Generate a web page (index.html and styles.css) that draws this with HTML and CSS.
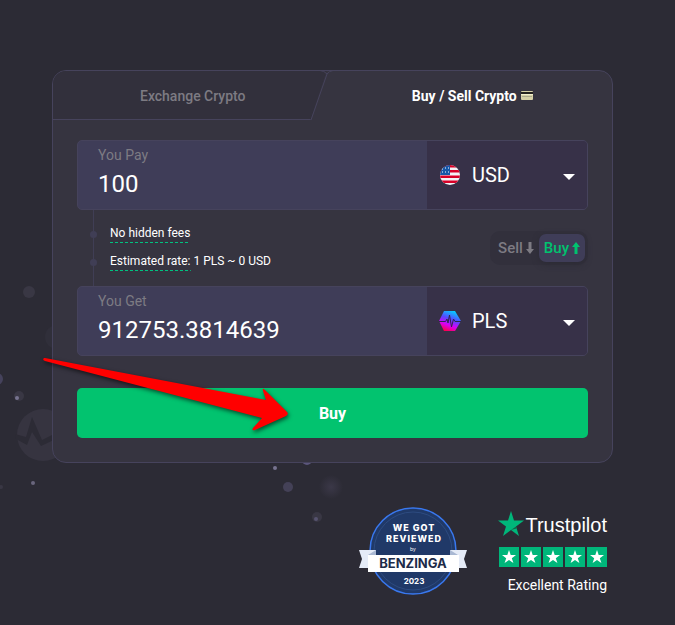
FILE: index.html
```html
<!DOCTYPE html>
<html lang="en">
<head>
<meta charset="utf-8">
<meta name="viewport" content="width=device-width, initial-scale=1">
<title>Buy Crypto</title>
<link rel="stylesheet" href="styles.css">
</head>
<body>
<svg class="backdrop" width="400" height="625" viewBox="0 0 400 625" aria-hidden="true">
  <defs>
    <radialGradient id="haze"><stop offset="0" stop-color="#3b3848"/><stop offset="1" stop-color="#2c2b35"/></radialGradient>
  </defs>
  <circle cx="29" cy="292" r="6" fill="#393744"/>
  <circle cx="57" cy="337" r="12" fill="#302f3a"/>
  <circle cx="-3" cy="379" r="6" fill="#45425c"/>
  <circle cx="19" cy="396" r="5" fill="#393744"/>
  <circle cx="17" cy="398" r="2" fill="#77738f"/>
  <circle cx="43" cy="435" r="26" fill="#363440"/>
  <path d="M15 434l11 3 6-20 10 23 16-8v6l-17 8-9-14-5 13-11-6z" fill="#2c2b35"/>
  <circle cx="33" cy="483" r="2" fill="#69667d"/>
  <circle cx="1" cy="487" r="2" fill="#393744"/>
  <circle cx="275" cy="468" r="2" fill="#77738f"/>
  <circle cx="307" cy="460" r="5" fill="#5b567c"/>
  <circle cx="288" cy="487" r="5" fill="#444157"/>
  <circle cx="331" cy="487" r="12" fill="url(#haze)"/>
  <circle cx="317" cy="517" r="5" fill="#393744"/>
  <circle cx="316" cy="519" r="2" fill="#57536f"/>
</svg>

<main class="page">
  <form class="card">
    <nav class="tabs">
      <button class="tab tab-muted" type="button"><span>Exchange Crypto</span>
        <svg class="slant" width="24" height="50" viewBox="0 0 24 50" aria-hidden="true"><path d="M2 49L18 3Q20 0 24 -0.500M11 -0.500Q15 -0.500 18 3" fill="none" stroke="#46435c"/></svg>
      </button>
      <button class="tab tab-active" type="button"><span>Buy / Sell Crypto</span>
        <svg width="12" height="9" viewBox="0 0 12 9" aria-hidden="true"><rect width="12" height="9" rx="1" fill="#d5d0a6"/><path d="M0 1h12v2H0z" fill="#24231f"/><path d="M1 5h10v1H1z" fill="#aaa98c"/><path d="M0 3h12v1H0z" fill="#f1efcf"/></svg>
      </button>
    </nav>

    <div class="content">
      <div class="field">
        <div class="amount">
          <label for="pay">You Pay</label>
          <input id="pay" type="text" value="100">
        </div>
        <div class="currency">
          <svg class="coin" width="22" height="22" viewBox="0 0 22 22" aria-hidden="true">
            <defs><clipPath id="disc"><circle cx="11" cy="11" r="10"/></clipPath></defs>
            <g clip-path="url(#disc)">
              <path d="M0 0h22v22H0z" fill="#f3f1f5"/>
              <path d="M0 1h22v2.500H0zM0 6h22v2.500H0zM0 11.500h22V14H0zM0 16.500h22V19H0z" fill="#d80027"/>
              <path d="M0 0h11v11H0z" fill="#1658a8"/>
              <path d="M3 5h1M6 4h1M9 4h1M3 8h1M6 8h1M9 8h1" stroke="#fff" stroke-width="1.200"/>
            </g>
          </svg>
          <select aria-label="Currency to pay"><option>USD</option></select>
          <svg class="caret" width="12" height="6" viewBox="0 0 12 6" aria-hidden="true"><path d="M0 0h12L6 6z" fill="#fff"/></svg>
        </div>
      </div>

      <div class="middle">
        <ul class="notes">
          <li><span class="hint">No hidden fees</span></li>
          <li><span class="hint">Estimated rate:</span> 1 PLS ~ 0 USD</li>
        </ul>
        <div class="toggle">
          <button type="button">Sell
            <svg width="8" height="12" viewBox="0 0 8 12" aria-hidden="true"><path d="M2.500 0h3v7H8l-4 5-4-5h2.500z" fill="currentColor"/></svg>
          </button>
          <button class="on" type="button">Buy
            <svg width="8" height="12" viewBox="0 0 8 12" aria-hidden="true"><path d="M2.500 12h3V5H8L4 0 0 5h2.500z" fill="currentColor"/></svg>
          </button>
        </div>
      </div>

      <div class="field">
        <div class="amount">
          <label for="get">You Get</label>
          <input id="get" type="text" value="912753.3814639">
        </div>
        <div class="currency">
          <svg class="coin" width="22" height="22" viewBox="0 0 22 22" aria-hidden="true">
            <defs><linearGradient id="pulse" x1=".7" y1="0" x2=".3" y2="1"><stop offset="0" stop-color="#00d5ff"/><stop offset=".4" stop-color="#5548ff"/><stop offset=".7" stop-color="#d800f5"/><stop offset="1" stop-color="#ff0048"/></linearGradient></defs>
            <path d="M5 1h11l6 10-6 10H5L0 11z" fill="url(#pulse)"/>
            <path d="M0 11.500h6.500L8 9l1 4 1.500-8 2 12L14.500 9l1.500 2.500h6" fill="none" stroke="#30264c"/>
          </svg>
          <select aria-label="Currency to get"><option>PLS</option></select>
          <svg class="caret" width="12" height="6" viewBox="0 0 12 6" aria-hidden="true"><path d="M0 0h12L6 6z" fill="#fff"/></svg>
        </div>
      </div>

      <button class="submit" type="button">Buy</button>
    </div>

    <svg class="pointer" width="256" height="84" viewBox="0 0 256 84" aria-hidden="true"><path d="M3 4Q1 6 4 7L221 64 212 74Q210 77 214 76L245 62Q248 60 246 58L224 36Q221 33 222 37L225 46 4 4z" fill="#f00"/></svg>
  </form>

  <footer class="awards">
    <svg width="110" height="90" viewBox="0 0 110 90" role="img" aria-label="We got reviewed by Benzinga 2023">
      <circle cx="55" cy="45" r="43" fill="#203968" stroke="#3978ef" stroke-width="1.500"/>
      <circle cx="55" cy="45" r="39" fill="none" stroke="#2d4b80"/>
      <path d="M1 44h17v18H1l3-9zM109 44H92v18h17l-3-9z" fill="#e5ebf7"/>
      <path d="M10 49l8-5v5zM100 49l-8-5v5z" fill="#a9b8d3"/>
      <path d="M10 49h91v17H10z" fill="#fff"/>
      <g class="badge-text" text-anchor="middle">
        <text class="badge-line" x="56" y="25">WE GOT</text>
        <text class="badge-line" x="56" y="36">REVIEWED</text>
        <text class="badge-by" x="55" y="45">by</text>
        <text class="badge-name" x="55" y="62">BENZINGA</text>
        <text class="badge-year" x="56" y="78">2023</text>
      </g>
    </svg>
    <div class="trust">
      <div class="trust-name">
        <svg width="26" height="25" viewBox="0 0 26 25" aria-hidden="true"><path d="M13 0l3 9.500h10l-8 6L21 25l-8-6-8 6 3-9.500-8-6h10z" fill="#00b67a"/><path d="M18.500 17.500L13 19l5-3.500z" fill="#126149"/></svg>
        <span>Trustpilot</span>
      </div>
      <svg width="108" height="20" viewBox="0 0 108 20" role="img" aria-label="5 of 5 stars">
        <defs><g id="star"><path d="M0 0h20v20H0z" fill="#00b67a"/><path d="M10 3l1.700 5H17l-4.200 3.200L14.400 16 10 13l-4.400 3 1.600-4.800L3 8h5.300z" fill="#fff"/></g></defs>
        <use href="#star"/><use href="#star" x="22"/><use href="#star" x="44"/><use href="#star" x="66"/><use href="#star" x="88"/>
      </svg>
      <span class="trust-note">Excellent Rating</span>
    </div>
  </footer>
</main>
</body>
</html>
```
FILE: styles.css
```css
* { box-sizing: border-box; }
body {
  margin: 0;
  background: #2c2b35;
  color: #fff;
  font-family: Roboto, "Liberation Sans", sans-serif;
}
button, input, select {
  font: inherit;
  color: inherit;
  border: 0;
  padding: 0;
  margin: 0;
  background: none;
}
svg { display: block; flex: none; }
.backdrop { position: absolute; left: 0; top: 0; z-index: -1; }
.page { padding: 70px 62px 24px 52px; }

.card {
  position: relative;
  background: #363440;
  border: 1px solid #46435c;
  border-radius: 14px;
}
.tabs { display: grid; grid-template-columns: 1fr 1fr; height: 49px; }
.tab {
  position: relative;
  display: flex;
  align-items: center;
  justify-content: center;
  gap: 4px;
  font-size: 14px;
  font-weight: 500;
}
.tab-active { font-weight: 700; }
.tab-muted { color: #7d7b83; }
.tab-muted span { position: relative; }
.tab-muted::before {
  content: "";
  position: absolute;
  inset: 0;
  background: #32303c;
  border-bottom: 1px solid #46435c;
  border-top-left-radius: 13px;
  clip-path: polygon(0 0, calc(100% - 6px) 0, calc(100% - 22px) 100%, 0 100%);
}
.slant { position: absolute; right: 0; top: 0; overflow: visible; }

.content { padding: 20px 24px 24px; }
.field {
  display: grid;
  grid-template-columns: 1fr 160px;
  height: 70px;
  border: 1px solid #46435c;
  border-radius: 5px;
  background: #3f3d58;
  overflow: hidden;
}
.amount { display: flex; flex-direction: column; padding: 5px 20px; }
.amount label { font-size: 14px; line-height: 18px; color: #7d7b83; }
.amount input { width: 100%; height: 40px; font-size: 24px; outline: 0; }
.currency {
  display: flex;
  align-items: center;
  padding: 0 12px;
  background: #373148;
}
.currency select {
  flex: 1;
  min-width: 0;
  padding-left: 11px;
  font-size: 20px;
  appearance: none;
  outline: 0;
}
.caret { margin-top: 4px; }

.middle {
  display: flex;
  justify-content: space-between;
  align-items: center;
  height: 76px;
  padding-left: 16px;
}
.notes {
  list-style: none;
  margin: 0;
  padding: 13px 0 11px 16px;
  border-left: 1px solid #403e55;
  font-size: 12px;
  line-height: 20px;
}
.notes li { position: relative; height: 28px; }
.notes li:last-child { height: 24px; }
.notes li::before {
  content: "";
  position: absolute;
  left: -20px;
  top: 8px;
  width: 7px;
  height: 7px;
  border-radius: 50%;
  background: #403e55;
}
.hint {
  display: inline-block;
  background: repeating-linear-gradient(90deg, #00c280 0 3px, transparent 3px 5px) bottom / 100% 1px no-repeat;
}
.toggle {
  display: flex;
  padding: 3px;
  border-radius: 10px;
  background: #32303c;
}
.toggle button {
  display: flex;
  align-items: center;
  gap: 3px;
  height: 28px;
  padding: 0 5px;
  border-radius: 7px;
  font-size: 15px;
  font-weight: 500;
  color: #7d7b83;
}
.toggle .on {
  color: #00c26f;
  background: #3f3d58;
  box-shadow: 0 2px 6px #2c2b35;
}
.submit {
  display: block;
  width: 100%;
  height: 50px;
  margin-top: 32px;
  border-radius: 5px;
  background: #02c36f;
  font-size: 16px;
  font-weight: 700;
}
.pointer {
  position: absolute;
  left: -12px;
  top: 283px;
  filter: drop-shadow(1px 2px 2px rgb(0 0 0 / 60%));
  pointer-events: none;
}

.awards {
  display: flex;
  justify-content: flex-end;
  gap: 30px;
  padding: 43px 6px 0 0;
}
.badge-text { font-family: Inter, sans-serif; font-weight: 700; fill: #fff; }
.badge-line { font-size: 9px; font-weight: 800; letter-spacing: 1px; }
.badge-by { font-size: 5px; font-weight: 400; }
.badge-name { font-size: 13px; fill: #1d2b49; }
.badge-year { font-size: 8px; }
.trust { display: flex; flex-direction: column; align-items: flex-end; padding-top: 4px; }
.trust-name {
  display: flex;
  align-items: center;
  gap: 1px;
  height: 26px;
  margin-bottom: 11px;
  font-family: "Liberation Sans", sans-serif;
  font-size: 20px;
  line-height: 32px;
}
.trust-name span { padding-top: 4px; }
.trust-note { margin-top: 9px; font-size: 14px; line-height: 18px; }
```
